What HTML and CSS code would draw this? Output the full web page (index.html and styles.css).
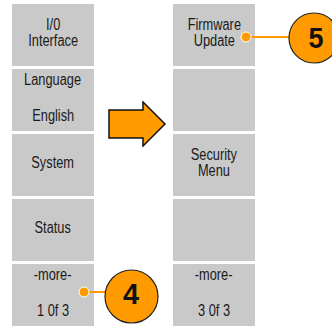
FILE: index.html
```html
<html>
    <head>
        <title>Utility menu</title>
        <link rel="stylesheet" href="styles.css">
    </head>
    <body>
        <div id="panel">
            <div class="column">
                <div class="btn"><span>I/0<br>Interface</span></div>
                <div class="btn split"><span>Language</span><span>English</span></div>
                <div class="btn"><span>System</span></div>
                <div class="btn"><span>Status</span></div>
                <div class="btn split"><span>-more-</span><span>1 0f 3</span></div>
            </div>

            <div id="arrowCell">
                <svg width="60" height="46" viewBox="0 0 60 46">
                    <polygon points="1,9 35,9 35,1 57,23 35,45 35,37 1,37"
                             fill="#ff9a00" stroke="#111" stroke-width="1.5" stroke-linejoin="miter"/>
                </svg>
            </div>

            <div class="column">
                <div class="btn"><span>Firmware<br>Update</span></div>
                <div class="btn"></div>
                <div class="btn"><span>Security<br>Menu</span></div>
                <div class="btn"></div>
                <div class="btn split"><span>-more-</span><span>3 0f 3</span></div>
            </div>
        </div>

        <!-- callouts sit over the buttons -->
        <svg id="callouts" width="332" height="330" viewBox="0 0 332 330">
            <line x1="84" y1="292" x2="106" y2="292" stroke="#ff9a00" stroke-width="2"/>
            <circle cx="84" cy="292" r="5" fill="#ff9a00" stroke="#fff" stroke-width="1"/>
            <circle cx="131.5" cy="296.5" r="26.5" fill="#ff9a00" stroke="#222" stroke-width="1.2"/>
            <text class="num" x="131" y="304" textLength="16" lengthAdjust="spacingAndGlyphs">4</text>

            <line x1="246" y1="37" x2="290" y2="37" stroke="#ff9a00" stroke-width="2"/>
            <circle cx="246" cy="37" r="5" fill="#ff9a00" stroke="#fff" stroke-width="1"/>
            <circle cx="314" cy="38" r="25" fill="#ff9a00" stroke="#222" stroke-width="1.2"/>
            <text class="num" x="316" y="48" textLength="15" lengthAdjust="spacingAndGlyphs">5</text>
        </svg>
    </body>
</html>
```

FILE: styles.css
```css
body {
    margin: 0;
    background: white;
    font-family: "Liberation Sans", Arial, sans-serif;
    color: #1a1a1a;
}

#panel {
    display: flex;
    padding: 4px 0 0 12px;
}

.column {
    display: flex;
    flex-direction: column;
    gap: 3px;
    width: 82px;
}

.btn {
    height: 62px;
    box-sizing: border-box;
    background: #c9c9c9;
    display: flex;
    flex-direction: column;
    justify-content: center;
    align-items: center;
    text-align: center;
    font-size: 16px;
    line-height: 16px;
    padding: 3px 0 7px 0;
}

/* the menu face is a narrow sans */
.btn span {
    display: inline-block;
    transform: scaleX(0.8);
    white-space: nowrap;
}

.btn.split {
    justify-content: space-between;
}

#arrowCell {
    width: 79px;
    padding: 97px 0 0 14px;
    box-sizing: border-box;
}

#callouts {
    position: absolute;
    left: 0;
    top: 0;
}

.num {
    font-weight: bold;
    font-size: 30px;
    text-anchor: middle;
    fill: #111;
}
```
